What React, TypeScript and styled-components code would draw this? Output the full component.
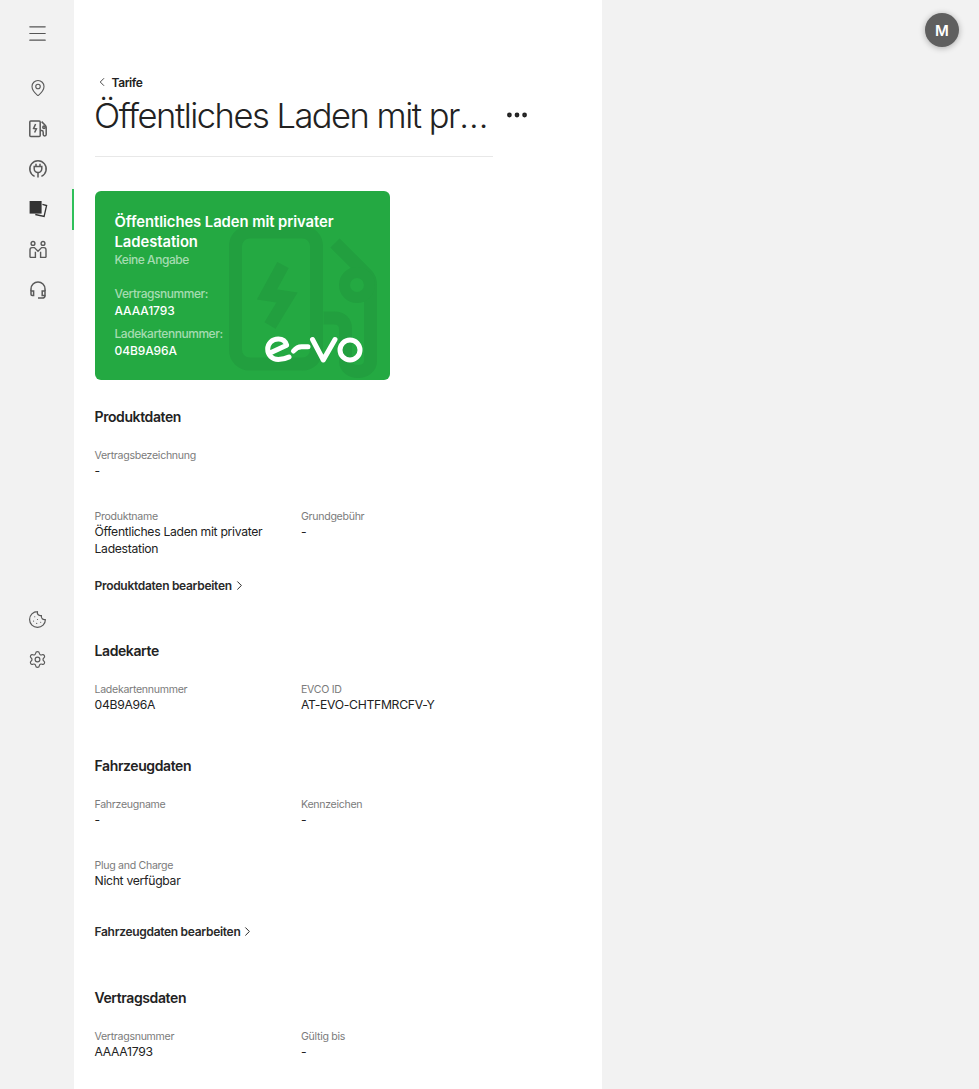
import { ReactElement, ReactNode } from 'react';
import styled, { createGlobalStyle } from 'styled-components';
import { ChevronLeft, ChevronRight, Cookie, Ellipsis, MapPin, Menu, Settings } from 'lucide-react';

const GlobalStyle = createGlobalStyle`
  html, body {
    margin: 0;
    padding: 0;
    background: #f2f2f2;
  }
  body {
    font-family: Inter, "Liberation Sans", Arial, sans-serif;
    color: #1f1f1f;
    overflow: hidden;
  }
`;

const Page = styled.div`
  display: flex;
  height: 1089px;
  overflow: hidden;
  width: 979px;
`;

const Sidebar = styled.aside`
  box-sizing: border-box;
  display: flex;
  flex: 0 0 74px;
  flex-direction: column;
  padding-top: 13px;
`;

const NavGroup = styled.nav`
  display: flex;
  flex-direction: column;
`;

const BottomNav = styled(NavGroup)`
  margin-top: 289px;
`;

const MenuButton = styled.div`
  align-items: center;
  color: #555;
  display: flex;
  height: 40px;
  justify-content: center;
  margin-bottom: 15px;
  padding-left: 1px;
`;

const NavItem = styled.div<{ $active?: boolean }>`
  align-items: center;
  border-right: 2px solid ${p => (p.$active ? '#2fc05a' : 'transparent')};
  box-sizing: border-box;
  color: ${p => (p.$active ? '#333' : '#5a5a5a')};
  display: flex;
  height: 40.4px;
  justify-content: center;
  padding-left: 3px;
  width: 74px;
`;

const Main = styled.main`
  background: #fff;
  box-sizing: border-box;
  flex: 0 0 528px;
  padding: 74px 21px 0 20.5px;
`;

const BackLink = styled.div`
  align-items: center;
  color: #222;
  display: flex;
  font-size: 12px;
  font-weight: 600;
  gap: 3px;
  height: 16px;
  letter-spacing: -0.4px;
`;

const TitleRow = styled.div`
  align-items: center;
  border-bottom: 1px solid #e8e8e8;
  display: flex;
  height: 52px;
  padding-bottom: 14px;
  position: relative;
  width: 398px;
`;

const Title = styled.h1`
  color: #222;
  font-size: 34.5px;
  font-weight: 300;
  letter-spacing: -1.5px;
  line-height: 42px;
  margin: 0 0 0 -0.5px;
  overflow: hidden;
  text-overflow: ellipsis;
  white-space: nowrap;
  width: 397px;
`;

const MoreButton = styled.div`
  color: #222;
  display: flex;
  left: 409px;
  position: absolute;
  top: 12px;
`;

const Card = styled.div`
  background: #24a942;
  border-radius: 6px;
  box-sizing: border-box;
  color: #fff;
  height: 189px;
  margin-top: 34px;
  overflow: hidden;
  padding: 21px 20px;
  position: relative;
  width: 295px;
`;

const CardArt = styled.svg`
  height: 189px;
  left: 0;
  position: absolute;
  top: 0;
  width: 295px;
`;

const CardContent = styled.div`
  position: relative;
`;

const CardTitle = styled.div`
  font-size: 14.8px;
  font-weight: 600;
  letter-spacing: -0.05px;
  line-height: 20px;
  width: 240px;
`;

const CardMuted = styled.div<{ $gap?: number }>`
  color: #a5dcb1;
  font-size: 12px;
  font-weight: 500;
  letter-spacing: -0.45px;
  line-height: 16px;
  margin-top: ${p => p.$gap ?? 0}px;
`;

const CardValue = styled.div`
  font-size: 12px;
  font-weight: 500;
  letter-spacing: -0.1px;
  line-height: 17px;
`;

const Section = styled.section<{ $top: number }>`
  margin-top: ${p => p.$top}px;
`;

const Heading = styled.h2`
  color: #222;
  font-size: 14px;
  font-weight: 600;
  letter-spacing: -0.4px;
  line-height: 18px;
  margin: 1px 0 22px;
`;

const FieldList = styled.div`
  display: flex;
  flex-direction: column;
  gap: 30px;
`;

const FieldRow = styled.div`
  display: grid;
  grid-template-columns: 206.5px 206px;
`;

const Label = styled.div`
  color: #7b7b7b;
  font-size: 10.6px;
  letter-spacing: -0.3px;
  line-height: 15px;
`;

const Value = styled.div`
  color: #222;
  font-size: 12.2px;
  letter-spacing: -0.3px;
  line-height: 17px;
  margin-top: -1px;
  width: 190px;
`;

const EditLink = styled.div<{ $top: number }>`
  align-items: center;
  color: #2a2a2a;
  display: flex;
  font-size: 12px;
  font-weight: 600;
  height: 16px;
  letter-spacing: -0.3px;
  margin-top: ${p => p.$top}px;
`;

const RightArea = styled.div`
  display: flex;
  flex: 1;
  justify-content: flex-end;
  padding: 13px 20px 0 0;
`;

const Avatar = styled.div`
  align-items: center;
  background: #5f5f5f;
  border-radius: 50%;
  box-shadow: 0 1px 6px rgba(0, 0, 0, 0.3);
  color: #fff;
  display: flex;
  font-size: 15px;
  font-weight: 600;
  height: 34px;
  justify-content: center;
  width: 34px;
`;

const ChargerIcon = () => (
  <svg width="20" height="20" viewBox="0 0 20 20" fill="none" stroke="currentColor" strokeWidth="1.5">
    <rect x="1.8" y="2" width="10.4" height="15.4" rx="1" />
    <path d="M7.6 5 5.6 9.4l2.8.5-1.8 3.6" />
    <path d="M13.6 2.6l3.6 3.6c.8.8 1 1.4 1 2.4v7c0 1.8-3 1.8-3 0v-2.4c0-1-.6-1.6-1.6-1.6H12" />
    <circle cx="16" cy="8.2" r="1.2" />
  </svg>
);

const PlugIcon = () => (
  <svg width="20" height="20" viewBox="0 0 20 20" fill="none" stroke="currentColor" strokeWidth="1.5">
    <path d="M6.6 17.4A8.2 8.2 0 1 1 13.4 17.4" />
    <path d="M6.2 7.4h7.6v2.4a3.8 3.8 0 0 1-7.6 0z" />
    <path d="M8 4.8v2.6M12 4.8v2.6M10 13.6v5" />
  </svg>
);

const CardsIcon = () => (
  <svg width="20" height="20" viewBox="0 0 20 20" fill="none">
    <path d="M14.4 5.4l4.2 1.1-2.5 11-8.8-2" stroke="currentColor" strokeWidth="1.3" />
    <rect x="1.6" y="2" width="12" height="12.6" fill="currentColor" />
  </svg>
);

const PeopleIcon = () => (
  <svg width="20" height="20" viewBox="0 0 20 20" fill="none" stroke="currentColor" strokeWidth="1.4">
    <circle cx="5" cy="3.4" r="1.9" />
    <circle cx="15" cy="3.4" r="1.9" />
    <path d="M2 17.4v-7.6c0-1.4.8-2.2 2-2.2h2.4l3.6 3.6 3.6-3.6H16c1.2 0 2 .8 2 2.2v7.6" />
    <path d="M2 17.4h5.4v-5.6M12.6 11.8v5.6H18" />
  </svg>
);

const HeadsetIcon = () => (
  <svg width="20" height="20" viewBox="0 0 20 20" fill="none" stroke="currentColor" strokeWidth="1.5">
    <path d="M3 11V9a7 7 0 0 1 14 0v2" />
    <path d="M3 11h2.6v4.4H4.2c-.8 0-1.2-.5-1.2-1.2zM17 11h-2.8v4.4H17z" />
    <path d="M17 15.4c0 1.8-1.2 2.6-2.8 2.6H10" />
  </svg>
);

const Watermark = () => (
  <g fill="none" stroke="#229f3f" strokeWidth="13">
    <rect x="140.5" y="41" width="81" height="132" rx="14" />
    <path d="M188 74l-16 29.5 20 3-17 28" strokeWidth="13" />
    <path d="M240 52l32 32c3 3 3.5 6 3.5 10v76c0 14-25 14-25 0v-32c0-7-4-11-11-11h-11" />
    <circle cx="262" cy="94" r="12.5" strokeWidth="11" />
  </g>
);

const Logo = () => (
  <g fill="none" stroke="#fff" strokeLinecap="round" strokeLinejoin="round" strokeWidth="5">
    <path d="M175 162l16.7-7.8C190.5 150 187 148 183.3 148 177 148 172.7 152.5 172.7 158 172.7 164 177 168.4 183.3 168.4 187.5 168.4 191 167.6 194 166" />
    <path d="M198.5 160c2.5-3 5-4.3 8-4.3h6.5" />
    <path d="M217.5 148.5l10.8 20.5 11.7-20.5" />
    <circle cx="255" cy="159" r="10" />
  </g>
);

function Field({ label, children }: { label: string; children?: ReactNode }): ReactElement {
  return (
    <div>
      <Label>{label}</Label>
      <Value>{children}</Value>
    </div>
  );
}

function App(): ReactElement {
  return (
    <Page>
      <GlobalStyle />
      <Sidebar>
        <NavGroup>
          <MenuButton>
            <Menu size={23} strokeWidth={1.3} />
          </MenuButton>
          <NavItem>
            <MapPin size={18} strokeWidth={1.5} />
          </NavItem>
          <NavItem>
            <ChargerIcon />
          </NavItem>
          <NavItem>
            <PlugIcon />
          </NavItem>
          <NavItem $active>
            <CardsIcon />
          </NavItem>
          <NavItem>
            <PeopleIcon />
          </NavItem>
          <NavItem>
            <HeadsetIcon />
          </NavItem>
        </NavGroup>
        <BottomNav>
          <NavItem>
            <Cookie size={19} strokeWidth={1.5} />
          </NavItem>
          <NavItem>
            <Settings size={19} strokeWidth={1.5} />
          </NavItem>
        </BottomNav>
      </Sidebar>

      <Main>
        <BackLink>
          <ChevronLeft size={14} strokeWidth={1.4} />
          Tarife
        </BackLink>
        <TitleRow>
          <Title>Öffentliches Laden mit privater Ladestation</Title>
          <MoreButton>
            <Ellipsis size={26} strokeWidth={2.4} />
          </MoreButton>
        </TitleRow>

        <Card>
          <CardArt viewBox="0 0 295 189">
            <Watermark />
            <Logo />
          </CardArt>
          <CardContent>
            <CardTitle>Öffentliches Laden mit privater Ladestation</CardTitle>
            <CardMuted>Keine Angabe</CardMuted>
            <CardMuted $gap={18}>Vertragsnummer:</CardMuted>
            <CardValue>AAAA1793</CardValue>
            <CardMuted $gap={7}>Ladekartennummer:</CardMuted>
            <CardValue>04B9A96A</CardValue>
          </CardContent>
        </Card>

        <Section $top={28}>
          <Heading>Produktdaten</Heading>
          <FieldList>
            <FieldRow>
              <Field label="Vertragsbezeichnung">-</Field>
            </FieldRow>
            <FieldRow>
              <Field label="Produktname">Öffentliches Laden mit privater Ladestation</Field>
              <Field label="Grundgebühr">-</Field>
            </FieldRow>
          </FieldList>
          <EditLink $top={20}>
            Produktdaten bearbeiten
            <ChevronRight size={15} strokeWidth={1.6} />
          </EditLink>
        </Section>

        <Section $top={49}>
          <Heading>Ladekarte</Heading>
          <FieldRow>
            <Field label="Ladekartennummer">04B9A96A</Field>
            <Field label="EVCO ID">AT-EVO-CHTFMRCFV-Y</Field>
          </FieldRow>
        </Section>

        <Section $top={44}>
          <Heading>Fahrzeugdaten</Heading>
          <FieldList>
            <FieldRow>
              <Field label="Fahrzeugname">-</Field>
              <Field label="Kennzeichen">-</Field>
            </FieldRow>
            <FieldRow>
              <Field label="Plug and Charge">Nicht verfügbar</Field>
            </FieldRow>
          </FieldList>
          <EditLink $top={34}>
            Fahrzeugdaten bearbeiten
            <ChevronRight size={15} strokeWidth={1.6} />
          </EditLink>
        </Section>

        <Section $top={50}>
          <Heading>Vertragsdaten</Heading>
          <FieldRow>
            <Field label="Vertragsnummer">AAAA1793</Field>
            <Field label="Gültig bis">-</Field>
          </FieldRow>
        </Section>
      </Main>

      <RightArea>
        <Avatar>M</Avatar>
      </RightArea>
    </Page>
  );
}

export default App;
